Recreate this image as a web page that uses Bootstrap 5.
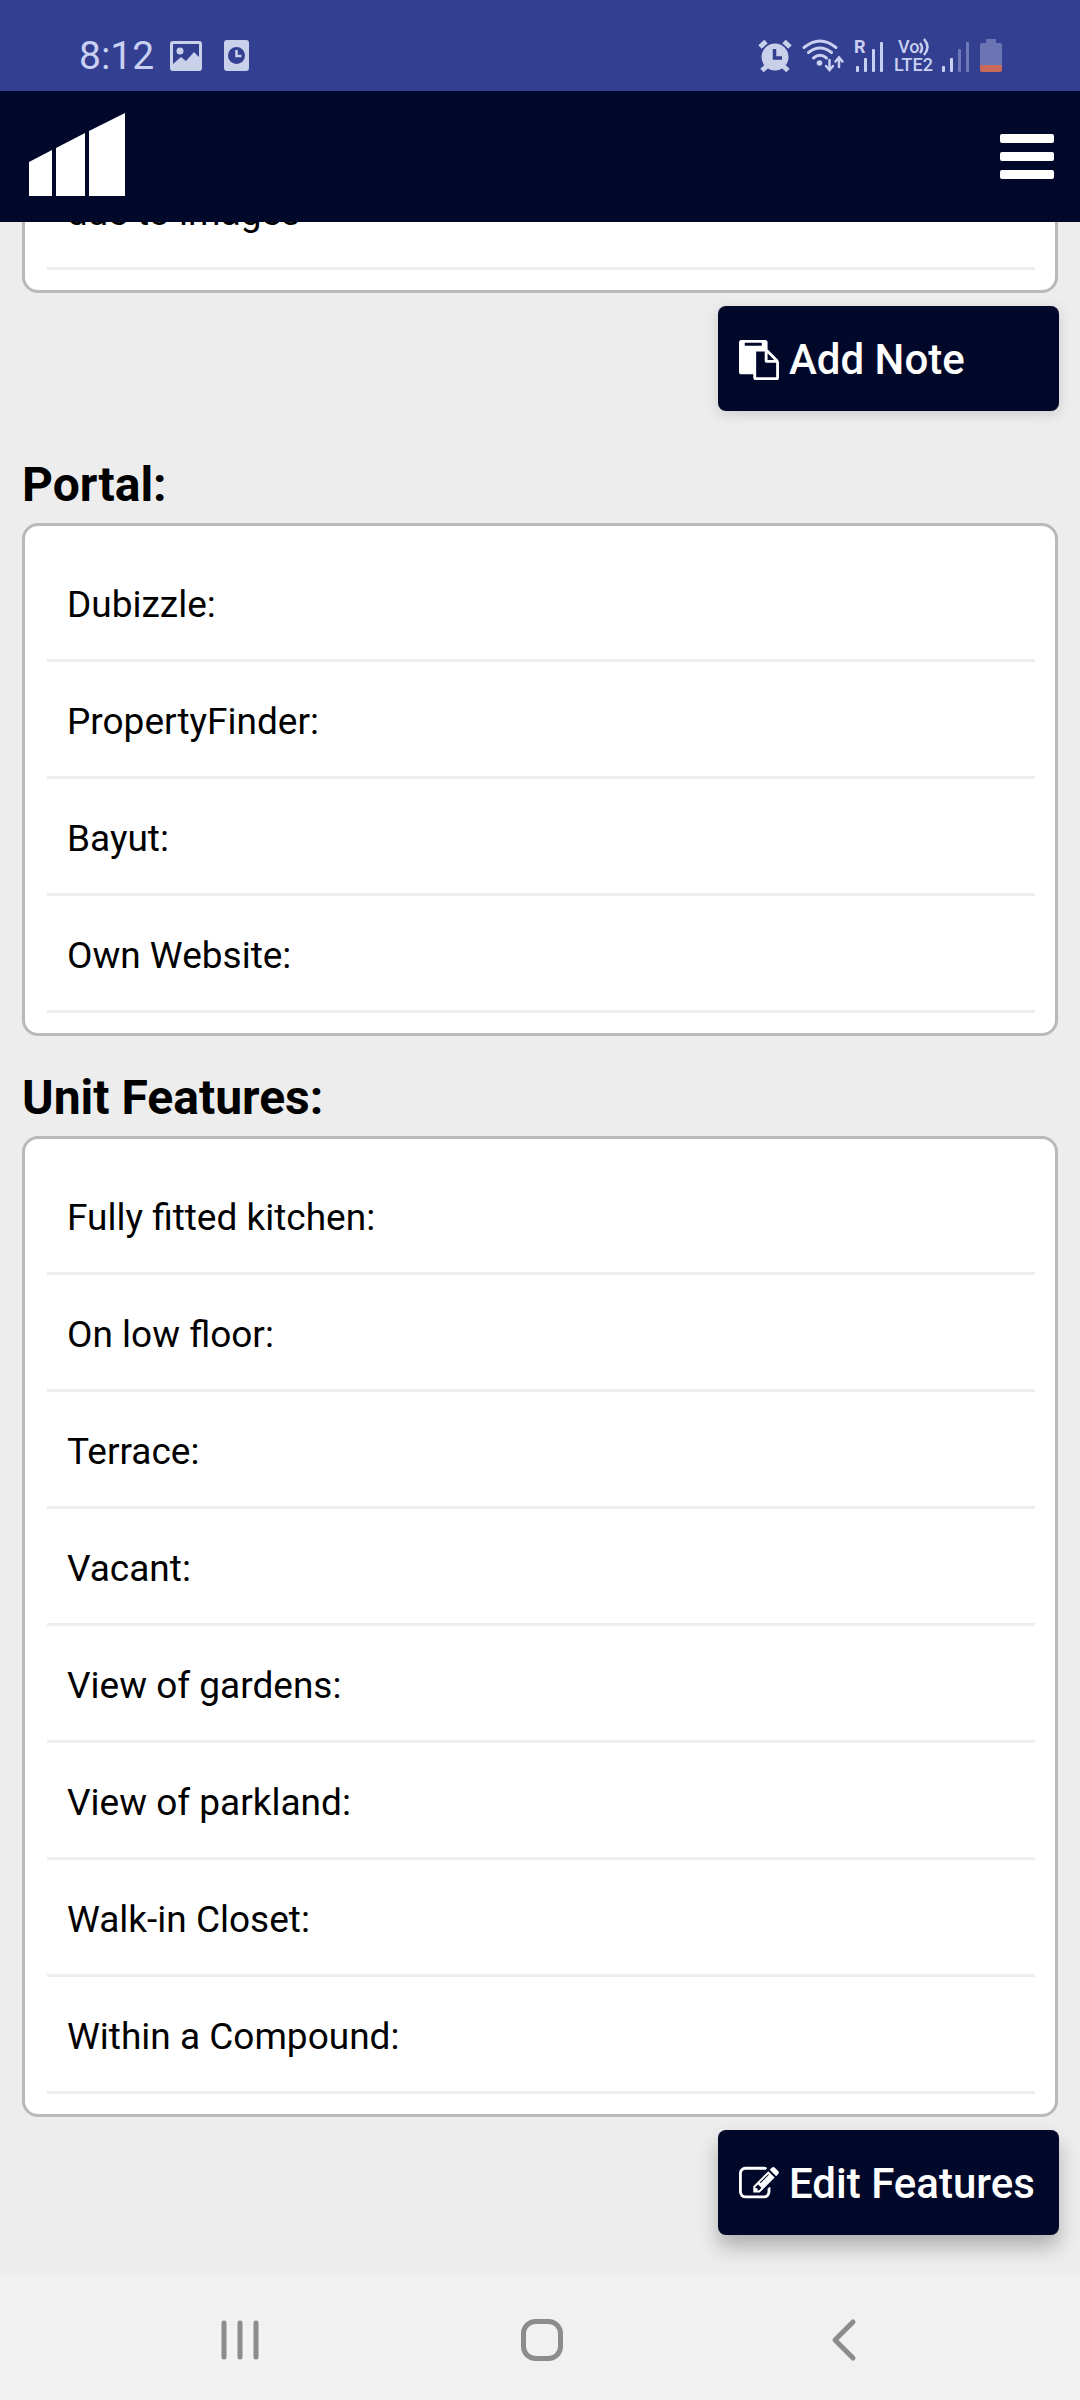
<!DOCTYPE html>
<html lang="en">
<head>
<meta charset="utf-8">
<meta name="viewport" content="width=device-width, initial-scale=1">
<title>Unit details</title>
<link href="https://cdn.jsdelivr.net/npm/bootstrap@5.3.0/dist/css/bootstrap.min.css" rel="stylesheet">
<style>
  body { background: #ededed; color: #000; font-family: Roboto, "Noto Sans", sans-serif; }
  svg { display: block; flex: none; overflow: visible; }
  .app-top { z-index: 10; }
  .status-bar { background: #333f90; color: #c9d0f2; height: 91px; padding: 20px 78px 0 79px; }
  .clock { font-size: 39px; line-height: 48px; margin-right: 16px; }
  .photo-icon { margin-right: 22px; }
  .status-icons { gap: 10px; }
  .net-label { font-size: 18px; font-weight: 500; line-height: 18px; }
  .net-col { width: 42px; }
  .top-nav { background: #02082a; height: 131px; padding: 0 26px 4px 29px; }
  .menu-btn { border: 0; border-radius: 0; margin-top: 4px; }
  .page-body { padding: 0 22px 38px; }
  .panel { border: 3px solid #b9b9b9; border-radius: 16px; padding: 19px 20px 20px 22px; }
  .panel-notes { margin-top: -91px; }
  .feature-row { background: transparent; border: 0; border-bottom: 3px solid #eee; color: #000; font-size: 37px; line-height: 56px; padding: 32px 20px 26px; }
  .section-title { font-size: 48px; font-weight: 700; line-height: 58px; margin: 33px 0 9px; }
  .action-row { margin: 13px -1px 0 0; }
  .action-row + .section-title { margin-top: 45px; }
  .action-btn, .action-btn:hover { background: #02082a; border: 0; border-radius: 8px; color: #fff; font-size: 42px; font-weight: 500; gap: 10px; height: 105px; line-height: 50px; min-width: 341px; padding: 2px 21px 0; box-shadow: 0 3px 14px rgba(0,0,0,.14); }
  .action-btn.raised { box-shadow: 0 12px 20px rgba(0,0,0,.26); }
  .system-nav { background: #f1f1f1; height: 127px; padding: 0 85px 0 89px; }
  .system-nav .btn { border: 0; color: #8c8c8c; padding-bottom: 0; }
</style>
</head>
<body>
<div class="d-flex flex-column min-vh-100">
  <header class="app-top sticky-top">
    <div class="status-bar d-flex align-items-center justify-content-between">
      <div class="d-flex align-items-center">
        <span class="clock">8:12</span>
        <svg class="photo-icon" width="32" height="30" viewBox="0 0 32 30" aria-hidden="true"><path fill="#c9d0ea" fill-rule="evenodd" d="M3 0h26a3 3 0 0 1 3 3v24a3 3 0 0 1-3 3H3a3 3 0 0 1-3-3V3a3 3 0 0 1 3-3zm0 3v20l8-7 5 4 8-9 5 5V3z"/><circle cx="10" cy="10" r="3.500" fill="#c9d0ea"/></svg>
        <svg width="25" height="31" viewBox="0 0 25 31" aria-hidden="true"><rect width="25" height="31" rx="3" fill="#c9d0ea"/><circle cx="12.500" cy="15.500" r="8.500" fill="#333f90"/><path d="M12.500 10v6h5" fill="none" stroke="#c9d0ea" stroke-width="2.500"/></svg>
      </div>
      <div class="status-icons d-flex align-items-center">
        <svg width="34" height="32" viewBox="0 0 34 32" aria-hidden="true"><g fill="none" stroke="#c9d0ea" stroke-width="5"><path d="M2 7l6-5.500M32 7l-6-5.500M9 26l-5 4.500M25 26l5 4.500" /></g><circle cx="17" cy="17" r="13.500" fill="#c9d0ea"/><path d="M16.500 9v9h7.500" fill="none" stroke="#333f90" stroke-width="3.500"/></svg>
        <svg width="42" height="33" viewBox="0 0 42 33" aria-hidden="true"><g fill="none" stroke="#c9d0f2" stroke-width="3" stroke-linecap="round"><path d="M2 8.500q16-13 32 0M6.500 13.500q11.500-9 23 0M11.500 19q6.500-5.500 13 0"/><path stroke-width="2.500" d="M27.500 21v9M24 27l3.500 4 3.500-4M37 28v-9M33.500 22.500l3.500-4 3.500 4"/></g><circle cx="17.500" cy="24" r="2.800" fill="#c9d0f2"/></svg>
        <div class="position-relative">
          <span class="net-label fw-bold position-absolute top-0 start-0">R</span>
          <svg width="30" height="36" viewBox="0 -2 30 36" role="img" aria-label="Roaming signal" fill="#c9d0f2"><rect x="2" y="26" width="3" height="6" rx="1"/><rect x="10" y="18" width="3" height="14" rx="1"/><rect x="18" y="9" width="3" height="23" rx="1"/><rect x="26" y="2" width="3" height="30" rx="1"/></svg>
        </div>
        <div class="d-flex align-items-center">
          <div class="net-col d-flex flex-column">
            <div class="d-flex ps-1"><span class="net-label">Vo</span><svg width="10" height="18" viewBox="0 0 10 18" aria-hidden="true"><path d="M1 5q4 5 0 10M5 1q7 8 0 16" fill="none" stroke="#c9d0f2" stroke-width="2.500"/></svg></div>
            <span class="net-label">LTE2</span>
          </div>
          <svg class="ms-1" width="30" height="36" viewBox="0 -2 30 36" role="img" aria-label="Second signal" fill="#c9d0f2"><rect x="2" y="26" width="3" height="6" rx="1"/><rect x="10" y="18" width="3" height="14" rx="1"/><g opacity=".4"><rect x="18" y="9" width="3" height="23" rx="1"/><rect x="26" y="2" width="3" height="30" rx="1"/></g></svg>
        </div>
        <svg width="22" height="33" viewBox="0 0 22 33" role="img" aria-label="Battery low"><path fill="#6b75b3" d="M6 0h10v4h4a2 2 0 0 1 2 2v21H0V6a2 2 0 0 1 2-2h4z"/><path fill="#c8695c" d="M0 26h22v5a2 2 0 0 1-2 2H2a2 2 0 0 1-2-2z"/></svg>
      </div>
    </div>
    <nav class="top-nav d-flex align-items-center justify-content-between" aria-label="Main">
      <a href="#" aria-label="Home"><svg width="97" height="83" viewBox="0 0 97 83"><path fill="#fff" d="M0 49L23 37V83H0zM27 35L56 20V83H27zM60 18L96 0V83H60z"/></svg></a>
      <button type="button" class="menu-btn btn p-0" aria-label="Menu"><svg width="54" height="45" viewBox="0 0 54 45" fill="#fff"><rect width="54" height="9" rx="2"/><rect y="18" width="54" height="9" rx="2"/><rect y="36" width="54" height="9" rx="2"/></svg></button>
    </nav>
  </header>

  <main class="page-body flex-grow-1">
    <section class="panel panel-notes bg-white">
      <ul class="list-group rounded-0"><li class="list-group-item rounded-0 feature-row">due to images</li></ul>
    </section>
    <div class="action-row d-flex justify-content-end">
      <button type="button" class="btn action-btn d-flex align-items-center"><svg width="40" height="40" viewBox="0 0 1792 1792" fill="currentColor" aria-hidden="true"><path d="M768 1664h896v-640h-416q-40 0-68-28t-28-68v-416h-384v1152zm256-1440v-64q0-13-9.500-22.500t-22.500-9.500h-704q-13 0-22.500 9.500t-9.500 22.500v64q0 13 9.500 22.500t22.500 9.500h704q13 0 22.500-9.500t9.500-22.500zm256 672h299l-299-299v299zm512 128v672q0 40-28 68t-68 28h-960q-40 0-68-28t-28-68v-160h-544q-40 0-68-28t-28-68v-1344q0-40 28-68t68-28h1088q40 0 68 28t28 68v328q21 13 36 28l408 408q28 28 48 76t20 88z"/></svg>Add Note</button>
    </div>

    <h2 class="section-title">Portal:</h2>
    <section class="panel bg-white">
      <ul class="list-group rounded-0">
        <li class="list-group-item rounded-0 feature-row">Dubizzle:</li>
        <li class="list-group-item rounded-0 feature-row">PropertyFinder:</li>
        <li class="list-group-item rounded-0 feature-row">Bayut:</li>
        <li class="list-group-item rounded-0 feature-row">Own Website:</li>
      </ul>
    </section>

    <h2 class="section-title">Unit Features:</h2>
    <section class="panel bg-white">
      <ul class="list-group rounded-0">
        <li class="list-group-item rounded-0 feature-row">Fully fitted kitchen:</li>
        <li class="list-group-item rounded-0 feature-row">On low floor:</li>
        <li class="list-group-item rounded-0 feature-row">Terrace:</li>
        <li class="list-group-item rounded-0 feature-row">Vacant:</li>
        <li class="list-group-item rounded-0 feature-row">View of gardens:</li>
        <li class="list-group-item rounded-0 feature-row">View of parkland:</li>
        <li class="list-group-item rounded-0 feature-row">Walk-in Closet:</li>
        <li class="list-group-item rounded-0 feature-row">Within a Compound:</li>
      </ul>
    </section>
    <div class="action-row d-flex justify-content-end">
      <button type="button" class="btn action-btn raised d-flex align-items-center"><svg width="40" height="40" viewBox="0 0 1792 1792" fill="currentColor" aria-hidden="true"><path d="M888 1184l116-116-152-152-116 116v56h96v96h56zm440-720q-16-16-33 1l-350 350q-17 17-1 33t33-1l350-350q17-17 1-33zm80 594v190q0 119-84.500 203.500t-203.500 84.500h-832q-119 0-203.500-84.500t-84.500-203.500v-832q0-119 84.500-203.500t203.500-84.500h832q63 0 117 25 15 7 18 23 3 17-9 29l-49 49q-14 14-32 8-23-6-45-6h-832q-66 0-113 47t-47 113v832q0 66 47 113t113 47h832q66 0 113-47t47-113v-126q0-13 9-22l64-64q15-15 35-7t20 29zm-96-738l288 288-672 672h-288v-288zm444 132l-92 92-288-288 92-92q28-28 68-28t68 28l152 152q28 28 28 68t-28 68z"/></svg>Edit Features</button>
    </div>
  </main>

  <footer class="system-nav d-flex align-items-center">
    <button type="button" class="btn flex-fill w-100 d-flex justify-content-center" aria-label="Recent apps"><svg width="40" height="42" viewBox="0 0 40 42" fill="none" stroke="currentColor" stroke-width="5" stroke-linecap="round"><path d="M4 4v34M20 4v34M36 4v34"/></svg></button>
    <button type="button" class="btn flex-fill w-100 d-flex justify-content-center" aria-label="Home screen"><svg width="42" height="42" viewBox="0 0 42 42" fill="none" stroke="currentColor" stroke-width="5"><rect x="2.500" y="2.500" width="37" height="37" rx="12"/></svg></button>
    <button type="button" class="btn flex-fill w-100 d-flex justify-content-center" aria-label="Back"><svg width="26" height="42" viewBox="0 0 26 42" fill="none" stroke="currentColor" stroke-width="5" stroke-linecap="round" stroke-linejoin="round"><path d="M22 3L4 21l18 18"/></svg></button>
  </footer>
</div>
<script src="https://cdn.jsdelivr.net/npm/bootstrap@5.3.0/dist/js/bootstrap.bundle.min.js"></script>
</body>
</html>
